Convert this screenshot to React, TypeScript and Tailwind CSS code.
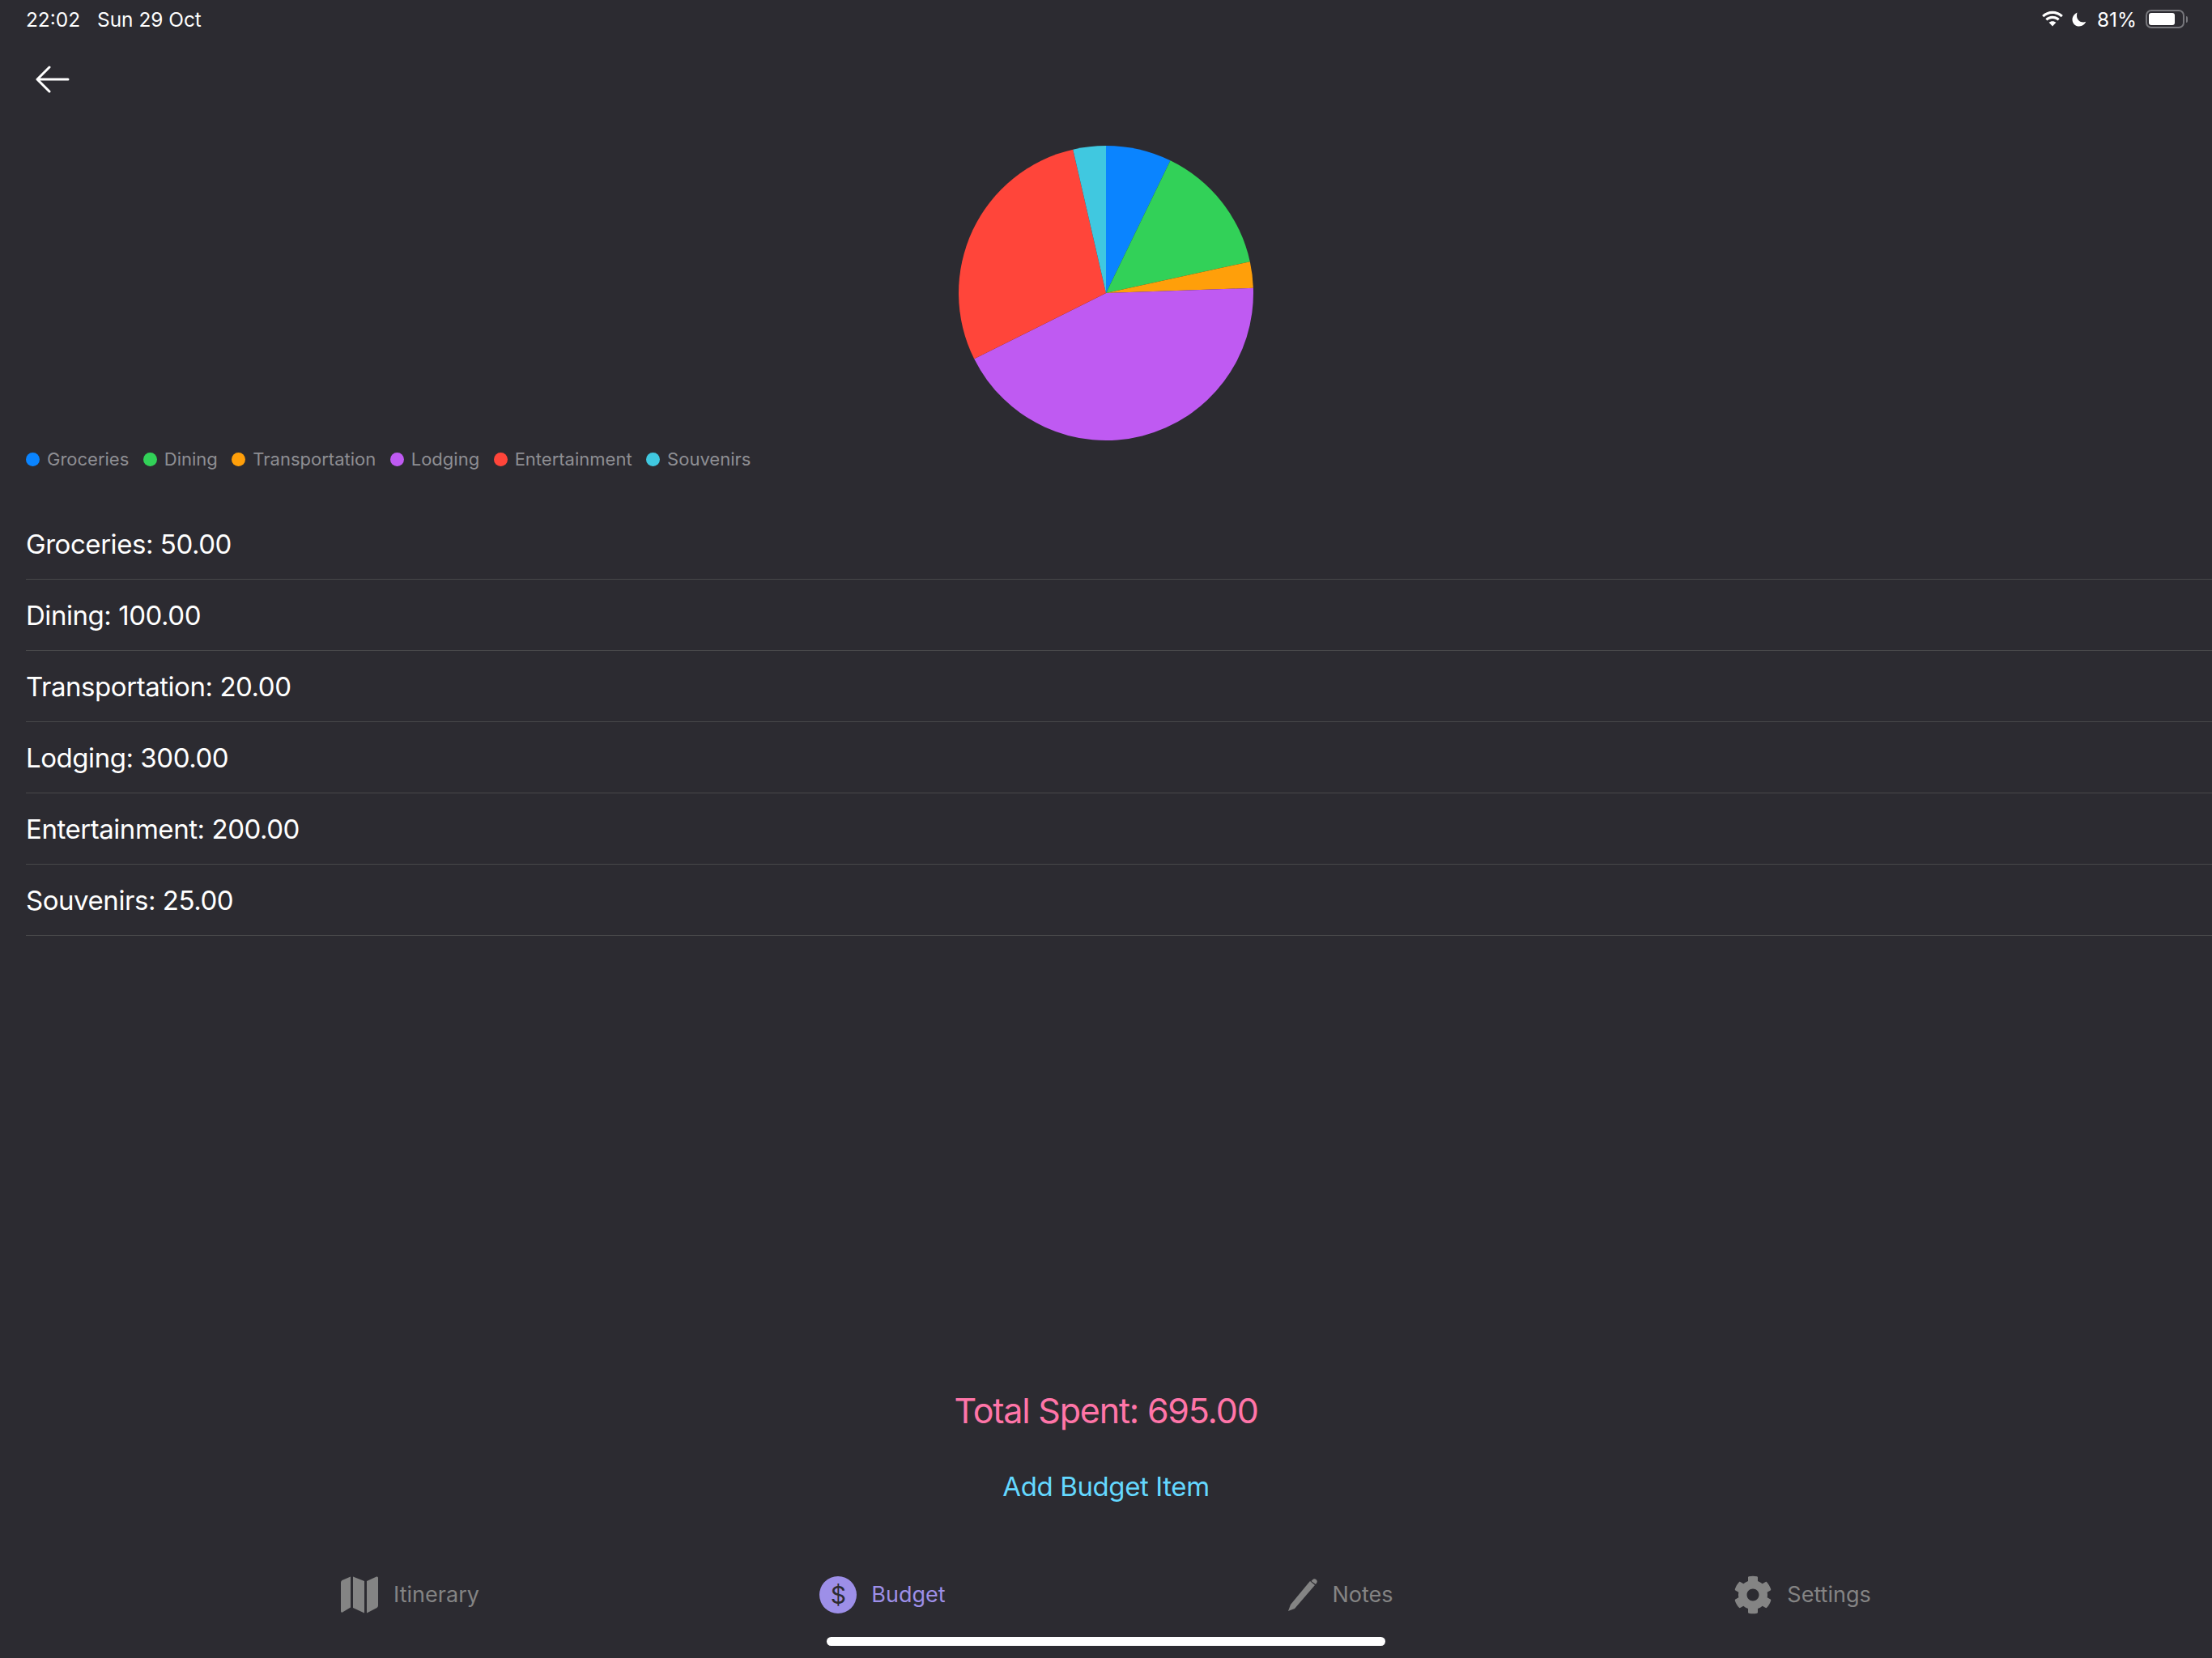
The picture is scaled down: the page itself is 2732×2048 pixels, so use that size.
import React from 'react';
import { FaCog } from 'react-icons/fa';

const items = [
  { name: 'Groceries', amount: 50, color: '#0a84ff' },
  { name: 'Dining', amount: 100, color: '#32d158' },
  { name: 'Transportation', amount: 20, color: '#ff9f0a' },
  { name: 'Lodging', amount: 300, color: '#bf5af2' },
  { name: 'Entertainment', amount: 200, color: '#ff453a' },
  { name: 'Souvenirs', amount: 25, color: '#40c8e0' },
];

const PieChart = () => {
  const total = items.reduce((sum, item) => sum + item.amount, 0);
  let angle = -Math.PI / 2;
  return (
    <svg width="366" height="366" viewBox="-183 -183 366 366">
      {items.map((item) => {
        const next = angle + (item.amount / total) * Math.PI * 2;
        const large = next - angle > Math.PI ? 1 : 0;
        const d = `M0 0L${182 * Math.cos(angle)} ${182 * Math.sin(angle)}A182 182 0 ${large} 1 ${182 * Math.cos(next)} ${182 * Math.sin(next)}Z`;
        angle = next;
        return <path key={item.name} d={d} fill={item.color} />;
      })}
    </svg>
  );
};

const StatusBar = () => (
  <div className="flex h-[46px] items-center justify-between pl-8 pr-[30px] pt-[2px] text-[24.4px] text-white">
    <div className="flex gap-[21px]">
      <span>22:02</span>
      <span>Sun 29 Oct</span>
    </div>
    <div className="flex items-center">
      <svg width="30" height="22" viewBox="0 0 28 20" fill="white">
        <path d="M14 3.500c3.900 0 7.400 1.500 10 4l2-2.100C22.800 2.300 18.600 .5 14 .5S5.200 2.300 2 5.400l2 2.100c2.600-2.500 6.100-4 10-4z" />
        <path d="M14 9c2.400 0 4.500.9 6.100 2.400l2-2.100C20 7.200 17.200 6 14 6s-6 1.200-8.100 3.300l2 2.100C9.500 9.900 11.600 9 14 9z" />
        <path d="M14 12c-1.600 0-3 .6-4.100 1.600L14 18l4.100-4.400C17 12.600 15.600 12 14 12z" />
      </svg>
      <svg width="20" height="20" viewBox="0 0 20 20" fill="white" className="ml-[8px]">
        <path d="M7.500 1.500C4 3 1.500 6.300 1.500 10.200c0 4.700 3.800 8.300 8.500 8.300 3.800 0 7-2.400 8.200-5.700-1 .4-2 .6-3.100.6-4.500 0-8.100-3.500-8.100-8 0-1.400.2-2.800.5-3.900z" />
      </svg>
      <span className="ml-[12px]">81%</span>
      <div className="ml-[11px] flex items-center">
        <div className="flex h-[23px] w-[48px] items-center rounded-[7px] border-2 border-[#77777c] p-[2px]">
          <div className="h-full w-[32px] rounded-[3px] bg-white" />
        </div>
        <div className="ml-[2px] h-[8px] w-[2px] rounded-r-full bg-[#77777c]" />
      </div>
    </div>
  </div>
);

const MapIcon = () => (
  <svg width="48" height="46" viewBox="0 0 48 46" fill="#848484">
    <path d="M1 8q0-2 1.500-3L13 .5v38L3 44.500q-2 .8-2-1.500z" />
    <path d="M16 .5l14 5.500v39.500L16 39z" />
    <path d="M33 6L45 .6q2-.6 2 1.500v34q0 2-1.500 3L33 45.500z" />
  </svg>
);

const PencilIcon = () => (
  <svg width="36" height="42" viewBox="0 0 36 42" fill="#848484">
    <path d="M0 41l3-8L27 4l6 5L8 38z" />
    <path d="M30 2.500q2-2.300 4.500-.5 2.300 2 .5 4.500L34 8l-5.500-4z" />
  </svg>
);

const Tab = ({ label, active, icon, className }: { label: string; active?: boolean; icon: React.ReactNode; className?: string }) => (
  <div className={`flex flex-1 items-center justify-center gap-[18px] ${className ?? ''}`}>
    {icon}
    <span className={`text-[27px] ${active ? 'text-[#9d8fe8]' : 'text-[#848484]'}`}>{label}</span>
  </div>
);

export default function App() {
  return (
    <div className="flex h-[2048px] w-[2732px] flex-col overflow-hidden bg-[#2c2b31] font-['Inter',sans-serif]">
      <StatusBar />
      <div className="flex h-[104px] items-center pl-[44px]">
        <svg width="42" height="34" viewBox="0 0 42 34" fill="none" stroke="white" strokeWidth="3" strokeLinecap="round" strokeLinejoin="round">
          <path d="M40 17H2M17 2L2 17l15 15" />
        </svg>
      </div>
      <div className="flex justify-center pt-[29px]">
        <PieChart />
      </div>
      <div className="mt-[1px] flex h-[42px] items-center gap-[17.5px] pl-8">
        {items.map((item) => (
          <div key={item.name} className="flex items-center gap-[9px]">
            <div className="h-[17px] w-[17px] rounded-full" style={{ backgroundColor: item.color }} />
            <span className="text-[22px] text-[#8e8e93]">{item.name}</span>
          </div>
        ))}
      </div>
      <div className="mt-[40px] flex flex-col">
        {items.map((item) => (
          <div key={item.name} className="ml-8 flex h-[88px] items-center border-b border-[#48484a] pt-[2px] text-[33px] tracking-[-0.45px] text-white">
            {item.name}: {item.amount.toFixed(2)}
          </div>
        ))}
      </div>
      <div className="flex-1" />
      <div className="text-center text-[43px] leading-[52px] tracking-[-1.2px] text-[#ff75a8]">Total Spent: 695.00</div>
      <div className="mt-[42px] text-center text-[33px] leading-[52px] tracking-[-0.4px] text-[#64d8ff]">Add Budget Item</div>
      <div className="mt-[82px] flex h-[52px] items-center pl-[217px] pr-[223px]">
        <Tab label="Itinerary" className="pl-[6px]" icon={<MapIcon />} />
        <Tab
          label="Budget"
          active
          className="pl-[18px]"
          icon={
            <div className="flex h-[46px] w-[46px] items-center justify-center rounded-full bg-[#9d8fe8] text-[30px] text-[#2c2b31]">$</div>
          }
        />
        <Tab label="Notes" className="pr-[4px]" icon={<PencilIcon />} />
        <Tab label="Settings" icon={<FaCog size={48} color="#848484" />} />
      </div>
      <div className="mt-[26px] mb-[15px] flex justify-center">
        <div className="h-[11px] w-[690px] rounded-full bg-white" />
      </div>
    </div>
  );
}
